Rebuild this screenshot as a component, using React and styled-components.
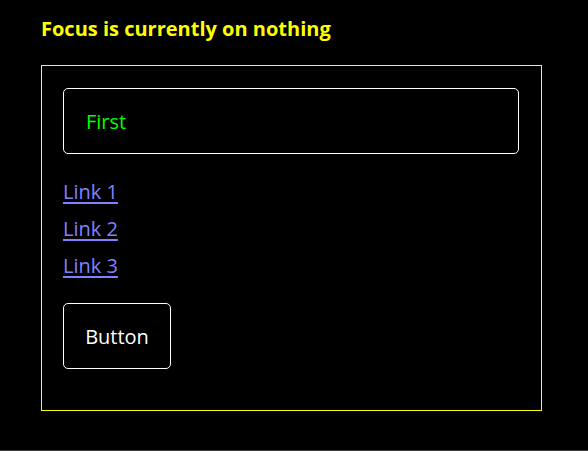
import React from "react";
import styled, { createGlobalStyle } from "styled-components";

const GlobalStyle = createGlobalStyle`
  html, body {
    margin: 0;
    padding: 0;
    background: #000000;
  }
  body {
    font-family: "Open Sans", "Noto Sans", "DejaVu Sans", sans-serif;
  }
`;

const Page = styled.div`
  width: 588px;
  height: 451px;
  box-sizing: border-box;
  padding: 0 41px;
  background: #000000;
  border-bottom: 1px solid #3a3a3a;
  color: #ffffff;
  overflow: hidden;
`;

const Status = styled.h1`
  margin: 0;
  padding-top: 15px;
  height: 65px;
  box-sizing: border-box;
  font-size: 20px;
  line-height: 28px;
  font-weight: 700;
  color: #ffff00;
`;

const Panel = styled.div`
  width: 501px;
  height: 346px;
  box-sizing: border-box;
  border: 1px solid #ffff00;
  padding: 22px 21px;
  display: flex;
  flex-direction: column;
  align-items: flex-start;
  gap: 19px;
`;

const Field = styled.div`
  width: 456px;
  height: 66px;
  box-sizing: border-box;
  border: 1px solid #ffffff;
  border-radius: 5px;
  padding-left: 22px;
  display: flex;
  align-items: center;
  font-size: 20px;
  color: #00ff00;
`;

const Links = styled.div`
  display: flex;
  flex-direction: column;
`;

const Link = styled.a`
  font-size: 20px;
  line-height: 37px;
  color: #8080ff;
  text-decoration: underline;
  text-underline-offset: 3px;
`;

const Button = styled.button`
  width: 108px;
  height: 66px;
  box-sizing: border-box;
  background: #000000;
  border: 1px solid #ffffff;
  border-radius: 5px;
  color: #ffffff;
  font-family: inherit;
  font-size: 20px;
  padding: 0;
  cursor: pointer;
`;

export default function App() {
  return (
    <>
      <GlobalStyle />
      <Page>
        <Status>Focus is currently on nothing</Status>
        <Panel>
          <Field>First</Field>
          <Links>
            <Link href="#">Link 1</Link>
            <Link href="#">Link 2</Link>
            <Link href="#">Link 3</Link>
          </Links>
          <Button>Button</Button>
        </Panel>
      </Page>
    </>
  );
}
